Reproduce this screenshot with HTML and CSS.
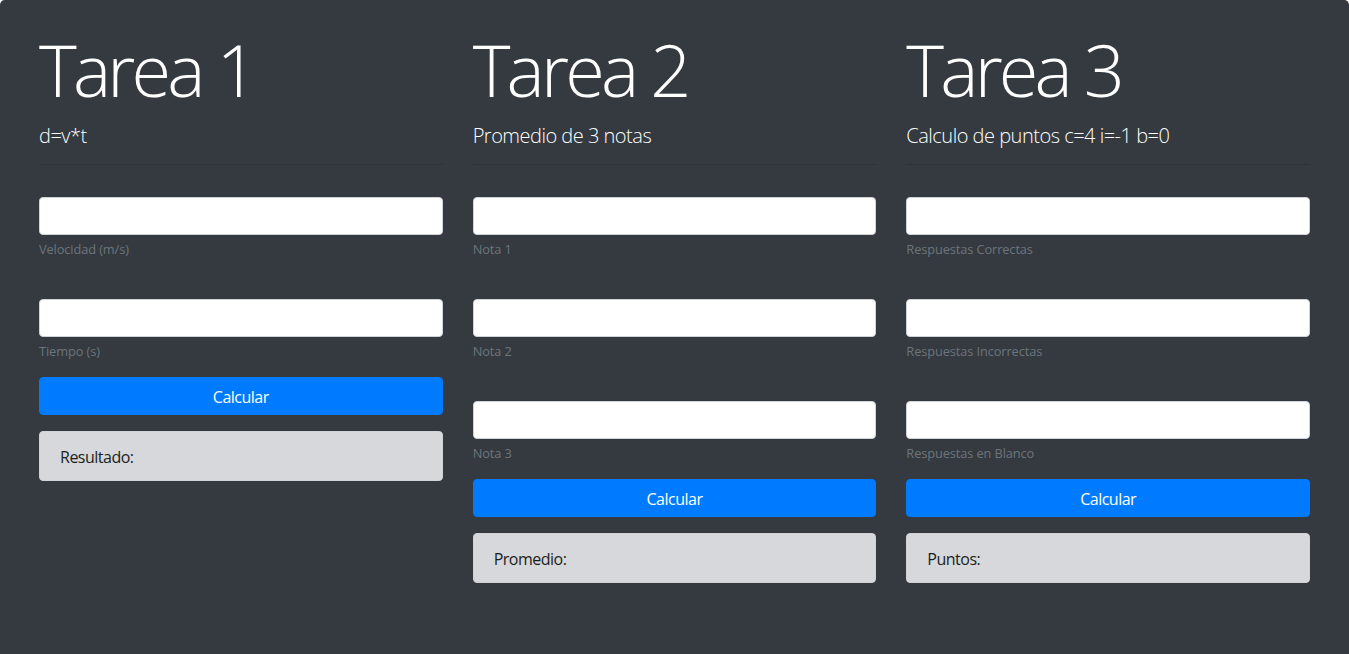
FILE: index.html
```html
<!DOCTYPE html>
<html lang="es">
<head>
<meta charset="utf-8">
<title>Tareas</title>
<link rel="stylesheet" href="styles.css">
</head>
<body>
<div class="jumbotron">
  <div class="row">
    <section class="col">
      <h1 class="title">Tarea 1</h1>
      <p class="lead">d=v*t</p>
      <hr class="rule">
      <div class="group">
        <input class="field" type="text">
        <small class="hint">Velocidad (m/s)</small>
      </div>
      <div class="group last">
        <input class="field" type="text">
        <small class="hint">Tiempo (s)</small>
      </div>
      <button class="btn" type="button">Calcular</button>
      <div class="result">Resultado:</div>
    </section>
    <section class="col">
      <h1 class="title">Tarea 2</h1>
      <p class="lead">Promedio de 3 notas</p>
      <hr class="rule">
      <div class="group">
        <input class="field" type="text">
        <small class="hint">Nota 1</small>
      </div>
      <div class="group">
        <input class="field" type="text">
        <small class="hint">Nota 2</small>
      </div>
      <div class="group last">
        <input class="field" type="text">
        <small class="hint">Nota 3</small>
      </div>
      <button class="btn" type="button">Calcular</button>
      <div class="result">Promedio:</div>
    </section>
    <section class="col">
      <h1 class="title">Tarea 3</h1>
      <p class="lead">Calculo de puntos c=4 i=-1 b=0</p>
      <hr class="rule">
      <div class="group">
        <input class="field" type="text">
        <small class="hint">Respuestas Correctas</small>
      </div>
      <div class="group">
        <input class="field" type="text">
        <small class="hint">Respuestas Incorrectas</small>
      </div>
      <div class="group last">
        <input class="field" type="text">
        <small class="hint">Respuestas en Blanco</small>
      </div>
      <button class="btn" type="button">Calcular</button>
      <div class="result">Puntos:</div>
    </section>
  </div>
</div>
</body>
</html>
```
FILE: styles.css
```css
* { box-sizing: border-box; }
html, body { margin: 0; padding: 0; background: #ffffff; }
body {
  font-family: "Open Sans", "Noto Sans", "Liberation Sans", sans-serif;
  font-size: 16px;
  line-height: 1.5;
  color: #212529;
}
.jumbotron {
  background: #343a40;
  border-radius: 4.8px;
  padding: 24px 39px 70px 39px;
  min-height: 700px;
}
.row {
  display: grid;
  grid-template-columns: repeat(3, 1fr);
  column-gap: 30px;
}
.col { display: flex; flex-direction: column; }
.title {
  margin: 0 0 8px 0;
  height: 86.4px;
  padding-top: 4px;
  font-size: 72px;
  font-weight: 300;
  line-height: 82.4px;
  letter-spacing: -3.8px;
  color: #ffffff;
}
.lead {
  margin: 0;
  height: 30px;
  padding-top: 5px;
  font-size: 20px;
  font-weight: 300;
  line-height: 25px;
  letter-spacing: -0.5px;
  color: #ffffff;
}
.rule {
  margin: 16px 0 32px 0;
  border: 0;
  border-top: 1px solid rgba(0,0,0,0.12);
  width: 100%;
}
.group { display: flex; flex-direction: column; margin-bottom: 40px; }
.group.last { margin-bottom: 16px; }
.field {
  display: block;
  width: 100%;
  height: 38px;
  padding: 6px 12px;
  font: inherit;
  background: #ffffff;
  border: 1px solid #ced4da;
  border-radius: 4px;
}
.hint {
  margin-top: 5px;
  font-size: 12.8px;
  line-height: 19px;
  letter-spacing: -0.1px;
  color: #6c757d;
}
.btn {
  display: block;
  width: 100%;
  height: 38px;
  padding: 7px 12px 5px 12px;
  font: inherit;
  letter-spacing: -0.5px;
  color: #ffffff;
  background: #007bff;
  border: 1px solid #007bff;
  border-radius: 4px;
}
.result {
  margin-top: 16px;
  padding: 13px 20px 11px 20px;
  background: #d6d8db;
  border: 1px solid #d0d2d5;
  border-radius: 4px;
  color: #1b1e21;
  line-height: 24px;
  letter-spacing: -0.5px;
}
```
